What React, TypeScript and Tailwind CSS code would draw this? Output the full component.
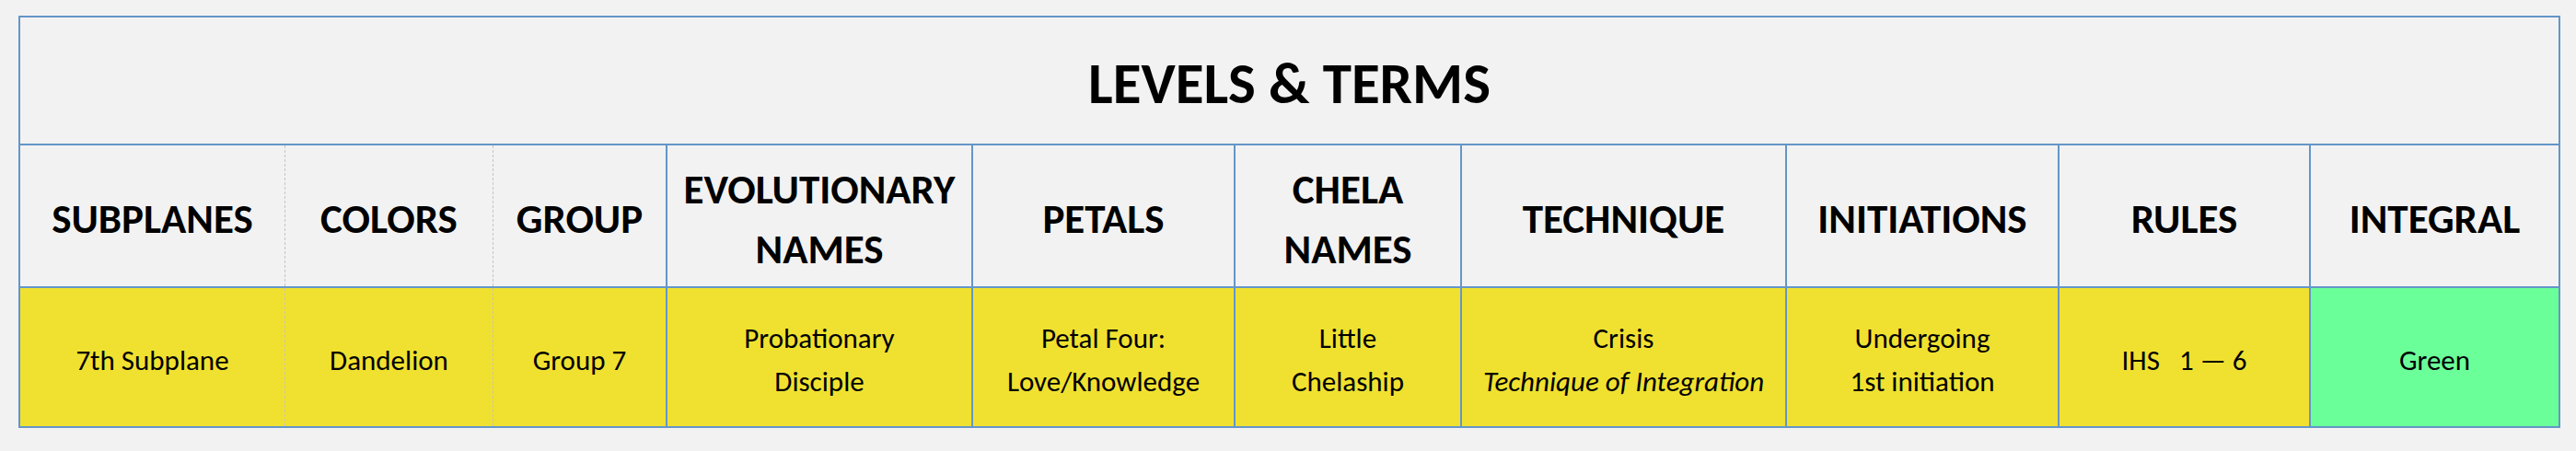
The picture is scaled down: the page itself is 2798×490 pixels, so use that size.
const columns = [
  { head: ['SUBPLANES'], body: ['7th Subplane'], w: 'w-[288px]', dashed: true },
  { head: ['COLORS'], body: ['Dandelion'], w: 'w-[226px]', dashed: true },
  { head: ['GROUP'], body: ['Group 7'], w: 'w-[189px]' },
  { head: ['EVOLUTIONARY', 'NAMES'], body: ['Probationary', 'Disciple'], w: 'w-[332px]' },
  { head: ['PETALS'], body: ['Petal Four:', 'Love/Knowledge'], w: 'w-[285px]' },
  { head: ['CHELA', 'NAMES'], body: ['Little', 'Chelaship'], w: 'w-[246px]' },
  { head: ['TECHNIQUE'], body: ['Crisis', '*Technique of Integration'], w: 'w-[353px]' },
  { head: ['INITIATIONS'], body: ['Undergoing', '1st initiation'], w: 'w-[296px]' },
  { head: ['RULES'], body: ['IHS   1 — 6'], w: 'w-[273px]' },
  { head: ['INTEGRAL'], body: ['Green'], w: 'w-[271px]', green: true },
]

function Cell({ dashed, className, children }: { dashed?: boolean; className: string; children: React.ReactNode }) {
  return (
    <div className={`flex border-b-2 border-[#6496c8] ${dashed ? '' : 'border-r-2'} ${className}`}>
      <div className="flex flex-1 flex-col items-center justify-center pt-[6px]">{children}</div>
      {dashed && <div className="w-0 self-stretch border-l border-dashed border-[#c4c4c4]" />}
    </div>
  )
}

export default function App() {
  return (
    <div className="min-h-[490px] w-[2798px] bg-[#f2f2f2] pt-[17px] pl-[20px] text-black font-['Carlito','Lato',sans-serif]">
      <div className="inline-flex flex-col border-l-2 border-t-2 border-[#6496c8]">
        <div className="flex h-[139px] items-center justify-center border-r-2 border-b-2 border-[#6496c8]">
          <h1 className="text-[63px] font-bold leading-none pt-[6px]">LEVELS &amp; TERMS</h1>
        </div>
        <div className="flex">
          {columns.map((c, i) => (
            <div key={i} className={`${c.w} flex flex-col`}>
              <Cell dashed={c.dashed} className="h-[155px] text-[45px] font-bold leading-[65px]">
                {c.head.map((t) => (
                  <span key={t}>{t}</span>
                ))}
              </Cell>
              <Cell
                dashed={c.dashed}
                className={`h-[152px] text-[31px] leading-[47px] ${c.green ? 'bg-[#6bff99]' : 'bg-[#f0e130]'}`}
              >
                {c.body.map((t) =>
                  t.startsWith('*') ? (
                    <span key={t} className="italic">{t.slice(1)}</span>
                  ) : (
                    <span key={t} className="whitespace-pre">{t}</span>
                  ),
                )}
              </Cell>
            </div>
          ))}
        </div>
      </div>
    </div>
  )
}
